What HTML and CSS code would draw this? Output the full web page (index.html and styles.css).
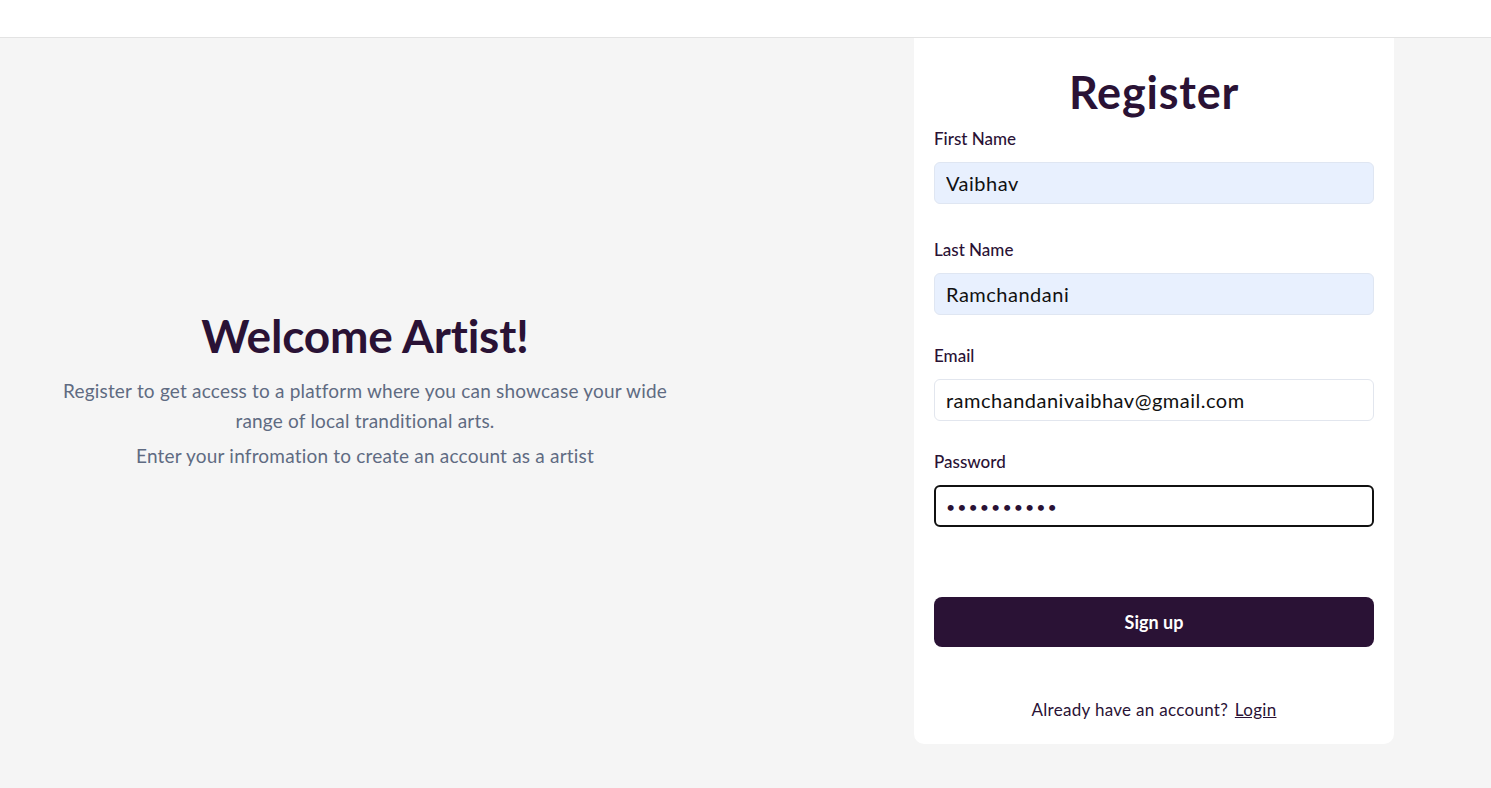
FILE: index.html
```html
<!DOCTYPE html>
<html lang="en">
<head>
<meta charset="utf-8">
<title>Register</title>
<link rel="stylesheet" href="styles.css">
</head>
<body>
<header class="topbar"></header>
<main class="page">
  <section class="intro">
    <h1 class="intro-title">Welcome Artist!</h1>
    <p class="intro-text">Register to get access to a platform where you can showcase your wide range of local tranditional arts.</p>
    <p class="intro-sub">Enter your infromation to create an account as a artist</p>
  </section>
  <section class="card">
    <h2 class="card-title">Register</h2>
    <form class="form">
      <div class="field field-first">
        <label class="label">First Name</label>
        <input class="input input-filled" type="text" value="Vaibhav">
      </div>
      <div class="field field-wide">
        <label class="label">Last Name</label>
        <input class="input input-filled" type="text" value="Ramchandani">
      </div>
      <div class="field">
        <label class="label">Email</label>
        <input class="input" type="email" value="ramchandanivaibhav@gmail.com">
      </div>
      <div class="field">
        <label class="label">Password</label>
        <input class="input input-focus" type="password" value="0123456789">
      </div>
      <button class="button" type="button">Sign up</button>
    </form>
    <p class="footer">Already have an account? <a class="link" href="#">Login</a></p>
  </section>
</main>
</body>
</html>
```

FILE: styles.css
```css
* { box-sizing: border-box; }
html, body { margin: 0; padding: 0; }
body {
  font-family: "Lato", "Noto Sans", sans-serif;
  background: #f5f5f5;
  color: #2a1235;
  height: 788px;
  overflow: hidden;
}
.topbar {
  height: 38px;
  background: #ffffff;
  border-bottom: 1px solid #e3e3e3;
}
.page {
  display: flex;
  align-items: center;
  height: 706px;
}
.intro {
  width: 730px;
  padding: 0 52px;
  text-align: center;
}
.intro-title {
  margin: 0 0 16px;
  font-size: 46px;
  font-weight: 700;
  line-height: 48px;
  color: #2a1235;
  letter-spacing: -0.2px;
}
.intro-text {
  margin: 0;
  font-size: 19px;
  line-height: 30px;
  letter-spacing: 0.2px;
  color: #5f6b82;
}
.intro-sub {
  margin: 5px 0 0;
  font-size: 19px;
  line-height: 30px;
  letter-spacing: 0.2px;
  color: #5f6b82;
}
.card {
  width: 480px;
  height: 706px;
  margin-left: auto;
  margin-right: 97px;
  background: #ffffff;
  border-radius: 0 0 10px 10px;
  padding: 26px 20px 0;
  display: flex;
  flex-direction: column;
}
.card-title {
  margin: 0;
  text-align: center;
  font-size: 45px;
  font-weight: 700;
  line-height: 56px;
  color: #2a1235;
  letter-spacing: 0.8px;
}
.form {
  display: flex;
  flex-direction: column;
}
.field {
  display: flex;
  flex-direction: column;
  margin-top: 29px;
}
.field-first { margin-top: 7px; }
.field-wide { margin-top: 34px; }
.label {
  font-size: 17px;
  line-height: 24px;
  font-weight: 500;
  color: #2a1235;
  margin-bottom: 11px;
}
.input {
  height: 42px;
  width: 100%;
  border: 1px solid #e2e6ee;
  border-radius: 6px;
  padding: 0 11px;
  font-family: inherit;
  font-size: 20px;
  letter-spacing: 0.5px;
  color: #111111;
  background: #ffffff;
  outline: none;
}
.input-filled {
  background: #e8f0fe;
  border-color: #dfe6f2;
}
.input-focus {
  border: 2px solid #111111;
  padding: 0 10px;
  font-size: 16px;
  letter-spacing: 2px;
  color: #2a1235;
}
.button {
  margin-top: 70px;
  height: 50px;
  width: 100%;
  border: none;
  border-radius: 8px;
  background: #2a1235;
  color: #ffffff;
  font-family: inherit;
  font-size: 18px;
  font-weight: 700;
  cursor: pointer;
}
.footer {
  margin: 51px 0 0;
  text-align: center;
  font-size: 17px;
  line-height: 24px;
  letter-spacing: 0.3px;
  color: #2a1235;
}
.link {
  color: #2a1235;
  text-decoration: underline;
  margin-left: 2px;
}
```
